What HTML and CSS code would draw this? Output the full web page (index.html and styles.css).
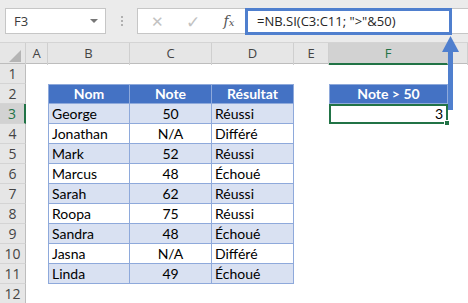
FILE: index.html
```html
<!DOCTYPE html>
<html lang="fr">
  <head>
    <meta charset="UTF-8" />
    <title>NB.SI</title>
    <link rel="stylesheet" href="styles.css">
  </head>
  <body>
    <div class="app">
      <!-- formula bar -->
      <div class="toolbar">
        <div class="name-box">
          <span>F3</span>
          <span class="caret"></span>
        </div>
        <div class="grip"><i></i><i></i><i></i></div>
        <div class="fx-area">
          <span class="btn">&#x2715;</span>
          <span class="btn check">&#x2713;</span>
          <span class="fx">f<small>x</small></span>
          <div class="formula">=NB.SI(C3:C11; "&gt;"&amp;50)</div>
        </div>
      </div>

      <!-- grid -->
      <div class="sheet">
        <div class="row head">
          <div class="corner"><span class="tri"></span></div>
          <div class="ch">A</div>
          <div class="ch">B</div>
          <div class="ch">C</div>
          <div class="ch">D</div>
          <div class="ch">E</div>
          <div class="ch sel">F</div>
          <div class="ch"></div>
        </div>
        <div class="row">
          <div class="rh">1</div>
          <div></div><div></div><div></div><div></div><div></div><div></div><div></div>
        </div>
        <div class="row">
          <div class="rh">2</div>
          <div></div>
          <div class="t th first top">Nom</div>
          <div class="t th top">Note</div>
          <div class="t th top">Résultat</div>
          <div></div>
          <div class="t th first top">Note &gt; 50</div>
          <div></div>
        </div>
        <div class="row">
          <div class="rh sel">3</div>
          <div></div>
          <div class="t band first">George</div>
          <div class="t band num">50</div>
          <div class="t band">Réussi</div>
          <div></div>
          <div class="active">3<span class="handle"></span></div>
          <div></div>
        </div>
        <div class="row">
          <div class="rh">4</div>
          <div></div>
          <div class="t first">Jonathan</div>
          <div class="t num">N/A</div>
          <div class="t">Différé</div>
          <div></div><div></div><div></div>
        </div>
        <div class="row">
          <div class="rh">5</div>
          <div></div>
          <div class="t band first">Mark</div>
          <div class="t band num">52</div>
          <div class="t band">Réussi</div>
          <div></div><div></div><div></div>
        </div>
        <div class="row">
          <div class="rh">6</div>
          <div></div>
          <div class="t first">Marcus</div>
          <div class="t num">48</div>
          <div class="t">Échoué</div>
          <div></div><div></div><div></div>
        </div>
        <div class="row">
          <div class="rh">7</div>
          <div></div>
          <div class="t band first">Sarah</div>
          <div class="t band num">62</div>
          <div class="t band">Réussi</div>
          <div></div><div></div><div></div>
        </div>
        <div class="row">
          <div class="rh">8</div>
          <div></div>
          <div class="t first">Roopa</div>
          <div class="t num">75</div>
          <div class="t">Réussi</div>
          <div></div><div></div><div></div>
        </div>
        <div class="row">
          <div class="rh">9</div>
          <div></div>
          <div class="t band first">Sandra</div>
          <div class="t band num">48</div>
          <div class="t band">Échoué</div>
          <div></div><div></div><div></div>
        </div>
        <div class="row">
          <div class="rh">10</div>
          <div></div>
          <div class="t first">Jasna</div>
          <div class="t num">N/A</div>
          <div class="t">Différé</div>
          <div></div><div></div><div></div>
        </div>
        <div class="row">
          <div class="rh">11</div>
          <div></div>
          <div class="t band first">Linda</div>
          <div class="t band num">49</div>
          <div class="t band">Échoué</div>
          <div></div><div></div><div></div>
        </div>
        <div class="row">
          <div class="rh">12</div>
          <div></div><div></div><div></div><div></div><div></div><div></div><div></div>
        </div>
      </div>

      <!-- callout arrow from formula to F3 -->
      <svg class="arrow" width="20" height="80" viewBox="0 0 20 80">
        <polygon points="10.5,2 19,18 2,18" fill="#4f7fce" />
        <rect x="8" y="17" width="5" height="59" fill="#4f7fce" />
      </svg>
    </div>
  </body>
</html>
```

FILE: styles.css
```css
* {
  box-sizing: border-box;
}

body {
  margin: 0;
  background: #ffffff;
  font-family: "Lato", "Liberation Sans", sans-serif;
}

.app {
  position: relative;
  width: 468px;
  height: 303px;
  overflow: hidden;
}

/* formula bar */
.toolbar {
  display: flex;
  align-items: center;
  height: 43px;
  padding: 0 0 0 5px;
  background: #ebebeb;
  border-bottom: 1px solid #d4d4d4;
}

.name-box {
  display: flex;
  align-items: center;
  justify-content: space-between;
  width: 101px;
  height: 26px;
  padding: 0 7px 0 8px;
  background: #ffffff;
  border: 1px solid #c6c6c6;
  font-family: "Open Sans", sans-serif;
  font-size: 13px;
  color: #3b3b3b;
}

.caret {
  width: 0;
  height: 0;
  border-left: 4px solid transparent;
  border-right: 4px solid transparent;
  border-top: 4px solid #777777;
}

.grip {
  display: flex;
  flex-direction: column;
  gap: 2px;
  width: 31px;
  align-items: center;
}

.grip i {
  width: 2px;
  height: 2px;
  background: #b0b0b0;
}

.fx-area {
  display: flex;
  align-items: center;
  flex: 1;
  height: 26px;
  background: #ffffff;
  border: 1px solid #c6c6c6;
  border-right: none;
}

.btn {
  width: 36px;
  text-align: center;
  font-size: 15px;
  color: #c2c2c2;
}

.btn:first-child {
  margin-left: 1px;
}

.check {
  font-size: 17px;
}

.fx {
  width: 36px;
  text-align: center;
  font-family: "DejaVu Serif", serif;
  font-style: italic;
  font-size: 14px;
  color: #555555;
}

.fx small {
  font-size: 10px;
}

.formula {
  width: 207px;
  height: 27px;
  margin-left: -2px;
  padding: 0 0 0 9px;
  border: 3px solid #4f7fce;
  background: #ffffff;
  font-family: "Open Sans", sans-serif;
  font-size: 13px;
  line-height: 20px;
  color: #262626;
}

/* grid */
.row {
  display: grid;
  grid-template-columns: 26px 22px 82px 82px 82px 35px 119px 20px;
  height: 20px;
}

.row > div {
  font-size: 14px;
  line-height: 19px;
  color: #000000;
}

.head {
  height: 21px;
  background: #e6e6e6;
  border-bottom: 1px solid #bdbdbd;
}

.head > div {
  text-align: center;
  font-family: "Open Sans", sans-serif;
  font-size: 13px;
  line-height: 20px;
  color: #444444;
  border-right: 1px solid #cfcfcf;
}

.corner {
  position: relative;
}

.tri {
  position: absolute;
  right: 4px;
  bottom: 3px;
  width: 0;
  height: 0;
  border-left: 12px solid transparent;
  border-bottom: 12px solid #b4b4b4;
}

.ch.sel {
  background: #d2d2d2;
  color: #217346;
  border-bottom: 2px solid #217346;
}

.rh {
  text-align: center;
  background: #e6e6e6;
  border-right: 1px solid #bdbdbd;
  border-bottom: 1px solid #d4d4d4;
  font-family: "Open Sans", sans-serif;
  color: #444444 !important;
}

.rh.sel {
  background: #d2d2d2;
  color: #217346 !important;
  border-right: 2px solid #217346;
}

/* table */
.t {
  padding-left: 3px;
  border-right: 1px solid #8ea9db;
  border-bottom: 1px solid #8ea9db;
  white-space: nowrap;
}

.t.first {
  border-left: 1px solid #8ea9db;
}

.t.top {
  border-top: 1px solid #8ea9db;
  line-height: 18px !important;
}

.th {
  background: #4472c4;
  color: #ffffff !important;
  font-weight: 700;
  text-align: center;
  padding-left: 0;
}

.band {
  background: #d9e1f2;
}

.num {
  text-align: center;
  padding-left: 0;
}

.active {
  position: relative;
  text-align: right;
  padding-right: 3px;
  border: 2px solid #217346;
  line-height: 16px !important;
}

.handle {
  position: absolute;
  right: -4px;
  bottom: -4px;
  width: 6px;
  height: 6px;
  background: #217346;
  border: 1px solid #ffffff;
}

.arrow {
  position: absolute;
  left: 440px;
  top: 34px;
}
```
